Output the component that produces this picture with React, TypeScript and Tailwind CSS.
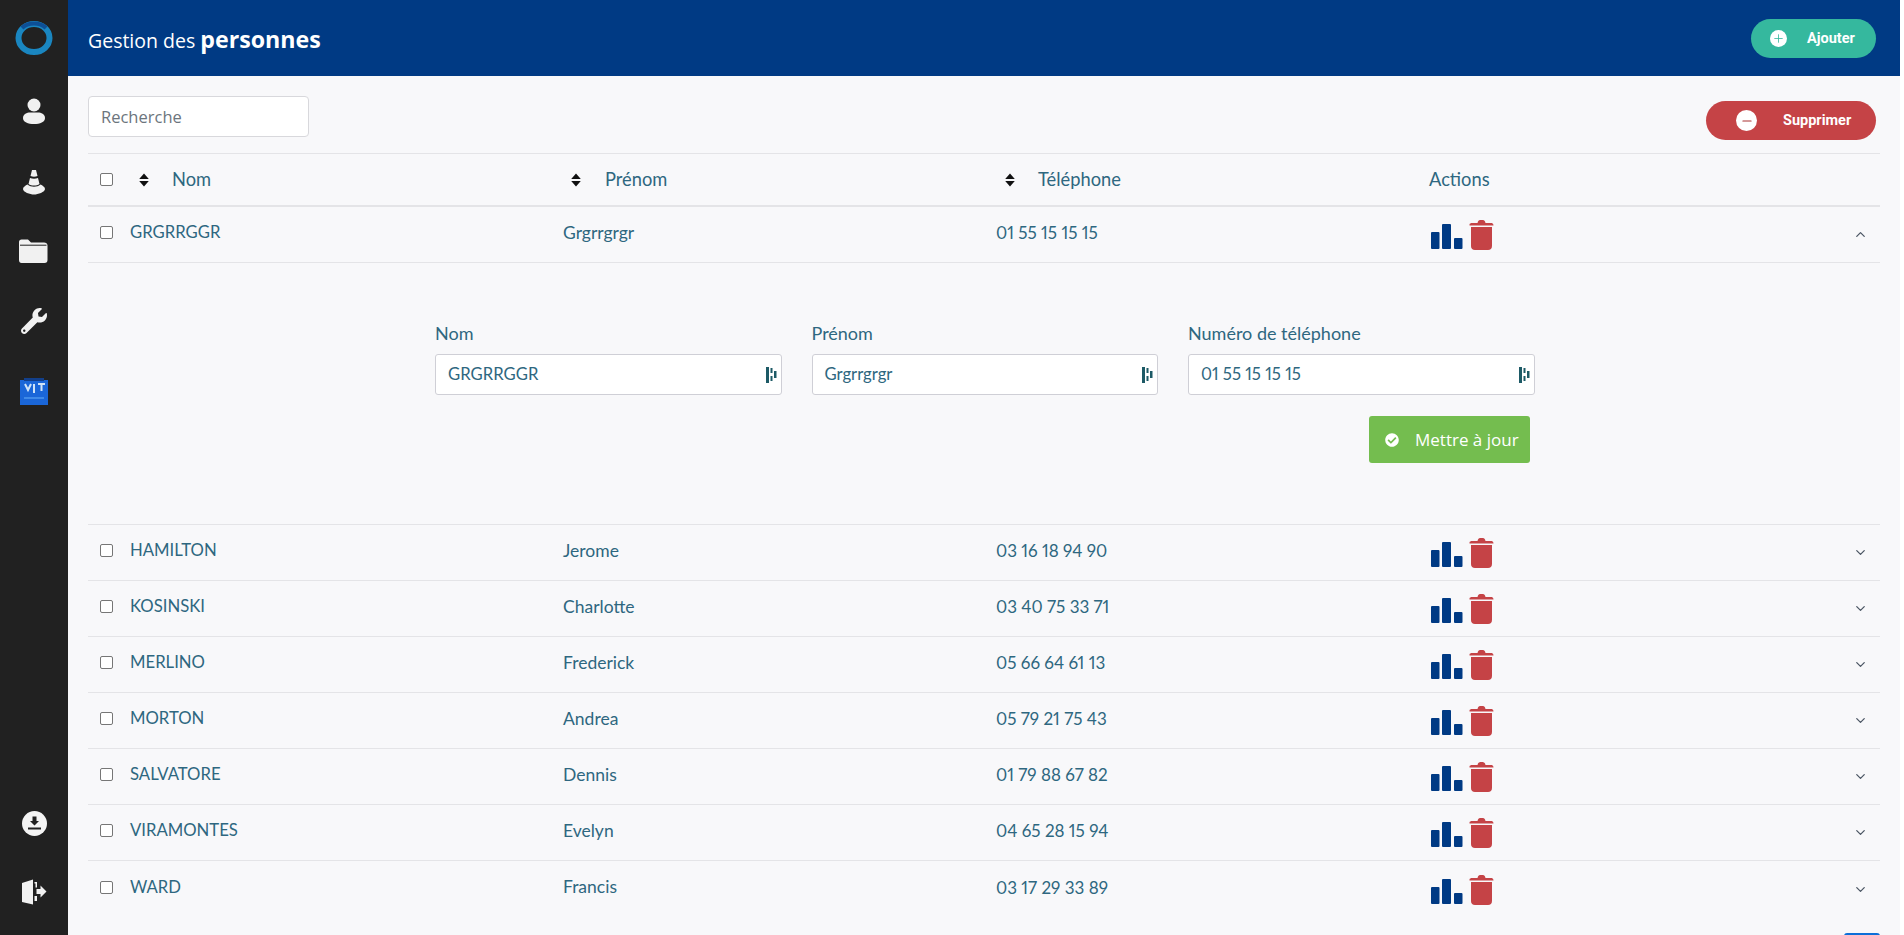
import React from 'react';
import { FaWrench, FaCheckCircle } from 'react-icons/fa';
import { ChevronDown, ChevronUp, Plus, Minus } from 'lucide-react';

const people = [
    { nom: 'HAMILTON', prenom: 'Jerome', tel: '03 16 18 94 90' },
    { nom: 'KOSINSKI', prenom: 'Charlotte', tel: '03 40 75 33 71' },
    { nom: 'MERLINO', prenom: 'Frederick', tel: '05 66 64 61 13' },
    { nom: 'MORTON', prenom: 'Andrea', tel: '05 79 21 75 43' },
    { nom: 'SALVATORE', prenom: 'Dennis', tel: '01 79 88 67 82' },
    { nom: 'VIRAMONTES', prenom: 'Evelyn', tel: '04 65 28 15 94' },
    { nom: 'WARD', prenom: 'Francis', tel: '03 17 29 33 89' },
];

const Box = () => <span className="block w-[13px] h-[13px] bg-white border border-[#767676] rounded-[2px]" />;

const SortIcon = () => (
    <svg width="10" height="14" viewBox="0 0 10 14" className="shrink-0">
        <path d="M5 0.5 L9.8 6 H0.2 Z M0.2 8 H9.8 L5 13.5 Z" fill="#111" />
    </svg>
);

const BarsIcon = () => (
    <svg width="32" height="26" viewBox="0 0 32 26" className="shrink-0">
        <rect x="0" y="8" width="8.5" height="17" rx="1" fill="#003a84" />
        <rect x="11" y="0" width="9" height="25" rx="1" fill="#003a84" />
        <rect x="23" y="14" width="8.5" height="11" rx="1" fill="#003a84" />
    </svg>
);

const TrashIcon = () => (
    <svg width="25" height="31" viewBox="0 0 25 31" className="shrink-0">
        <path d="M0.5 5.5 C0.5 4.5 2 4 3 4 H8.5 C9 1.5 10 1 12.5 1 C15 1 16 1.5 16.5 4 H22 C23 4 24.5 4.5 24.5 6.500 H0.5 Z" fill="#c54346" />
        <path d="M2 8 H23 V27 C23 29.5 21.500 31 19 31 H6 C3.500 31 2 29.5 2 27 Z" fill="#c54346" />
    </svg>
);

const FieldGlyph = () => (
    <svg width="11" height="16" viewBox="0 0 11 16" className="shrink-0">
        <rect x="0" y="0" width="3" height="16" fill="#1d5a66" />
        <rect x="4.5" y="1" width="2" height="5" fill="#1d5a66" />
        <rect x="4.5" y="9" width="2" height="5" fill="#1d5a66" />
        <rect x="8" y="4" width="2.5" height="7" fill="#1d5a66" />
    </svg>
);

const Logo = () => (
    <svg width="40" height="36" viewBox="0 0 40 36">
        <ellipse cx="20" cy="18" rx="15.5" ry="14" fill="none" stroke="#1a86c0" strokeWidth="6" />
        <path d="M8 8 C14 2 26 2 32 8" fill="none" stroke="#0d4f96" strokeWidth="4" />
    </svg>
);

const UserIcon = () => (
    <svg width="24" height="26" viewBox="0 0 24 26">
        <circle cx="12" cy="7" r="6.5" fill="#f1f1f1" />
        <path d="M1 20 C1 16 5 14.5 8 14.5 H16 C19 14.5 23 16 23 20 C23 24 18 26 12 26 C6 26 1 24 1 20 Z" fill="#f1f1f1" />
    </svg>
);

const ConeIcon = () => (
    <svg width="24" height="26" viewBox="0 0 24 26">
        <path d="M10 1 H14 L15.500 7 C13.500 8 10.500 8 8.500 7 Z" fill="#f1f1f1" />
        <path d="M8 9 C10.500 10 13.500 10 16 9 L17.500 15 C14.500 17 9.500 17 6.500 15 Z" fill="#f1f1f1" />
        <path d="M5.500 15.500 C9 18.500 15 18.500 18.500 15.500 C20.500 16.500 23 18 23 20 C23 23 16 25.500 12 25.500 C8 25.500 1 23 1 20 C1 18 3.500 16.500 5.500 15.500 Z" fill="#f1f1f1" />
    </svg>
);

const FolderIcon = () => (
    <svg width="30" height="26" viewBox="0 0 30 26">
        <path d="M1 4 C1 2.500 2 1.500 3.500 1.500 H10 L13 4.500 H26 C28 4.500 29.500 5.500 29.500 7.500 V22 C29.500 24 28.500 25 26.500 25 H3.500 C2 25 1 24 1 22 Z" fill="#f1f1f1" />
        <path d="M2 7.200 H28.500" stroke="#212121" strokeWidth="1" fill="none" />
    </svg>
);

const DownloadIcon = () => (
    <svg width="25" height="25" viewBox="0 0 25 25">
        <circle cx="12.500" cy="12.500" r="12.500" fill="#f4f4f4" />
        <path d="M10.500 5.500 H14.500 V10 H17 L12.500 14.500 L8 10 H10.500 Z" fill="#212121" />
        <rect x="6" y="16.500" width="13" height="2" fill="#212121" />
    </svg>
);

const ExitIcon = () => (
    <svg width="26" height="26" viewBox="0 0 26 26">
        <path d="M1 4 L12 0.500 V25.500 L1 23 Z" fill="#f1f1f1" />
        <path d="M13.500 3 H16 V8.500 H14.500 V4.500 H13.500 Z M13.500 17 H16 V22 H13.500 Z" fill="#f1f1f1" />
        <path d="M15.500 10 H19.500 V6.500 L25.500 12.500 L19.500 18.500 V15 H15.500 Z" fill="#f1f1f1" />
    </svg>
);

const AppTile = () => (
    <svg width="28" height="28" viewBox="0 0 28 28">
        <rect x="0" y="2" width="28" height="25" fill="#1a66d8" />
        <rect x="4" y="0" width="20" height="3" fill="#123f8a" />
        <path d="M5 6 L8 12 L11 6 M14 6 V15 M18 6 H25 M21.500 6 V13" fill="none" stroke="#cfe3f7" strokeWidth="2" />
        <rect x="4" y="19" width="20" height="2" fill="#3f8ae8" />
    </svg>
);

const Row = ({ nom, prenom, tel, open, last }: { nom: string; prenom: string; tel: string; open?: boolean; last?: boolean }) => (
    <div className={`flex items-center h-[56px] text-[17px] text-[#2e6780] proportional-nums ${last ? '' : 'border-b border-[#e4e4e7]'}`}>
        <div className="w-[42px] pl-3 shrink-0 -mt-[4px]"><Box /></div>
        <div className="w-[433px] shrink-0 -mt-[3px] text-[16.700px]">{nom}</div>
        <div className="w-[433px] shrink-0 -mt-[3px] text-[17.500px]">{prenom}</div>
        <div className="w-[434px] shrink-0 -mt-[3px]">{tel}</div>
        <div className="flex-1 flex items-end gap-[6px] pl-[1px]">
            <BarsIcon />
            <TrashIcon />
        </div>
        <div className="w-[27px] shrink-0 text-[#4b5563]">
            {open ? <ChevronUp size={15} /> : <ChevronDown size={15} />}
        </div>
    </div>
);

const Field = ({ label, value }: { label: string; value: string }) => (
    <div className="w-[346.500px] shrink-0">
        <div className="text-[18px] leading-[22px] text-[#2e6780]">{label}</div>
        <div className="mt-[10px] h-[41px] bg-white border border-[#cfcfd6] rounded-[3px] flex items-center justify-between pl-3 pr-[4px] text-[16.700px] text-[#2e6780] proportional-nums">
            <span>{value}</span>
            <FieldGlyph />
        </div>
    </div>
);

export default function App() {
    return (
        <div className="flex h-[935px] w-full overflow-hidden bg-[#f8f8fa] font-['Lato',sans-serif]">
            <aside className="w-[68px] shrink-0 bg-[#212121] flex flex-col items-center">
                <div className="mt-[20px]"><Logo /></div>
                <div className="mt-[42px]"><UserIcon /></div>
                <div className="mt-[45px]"><ConeIcon /></div>
                <div className="mt-[43px] -ml-[2px]"><FolderIcon /></div>
                <div className="mt-[44px] text-[#f1f1f1] text-[26px]"><FaWrench /></div>
                <div className="mt-[44px]"><AppTile /></div>
                <div className="mt-auto"><DownloadIcon /></div>
                <div className="mt-[43px] mb-[30px]"><ExitIcon /></div>
            </aside>

            <main className="w-[1832px] shrink-0 flex flex-col">
                <header className="h-[76px] shrink-0 bg-[#003a84] flex items-center justify-between pl-[20px] pr-[24px]">
                    <h1 className="text-[19.500px] text-white font-['Open_Sans',sans-serif] mt-[3px]">
                        Gestion des <span className="text-[23.200px] font-bold">personnes</span>
                    </h1>
                    <button className="w-[125px] h-[39px] rounded-full bg-[#35b89e] flex items-center pl-[19px] text-white text-[14.500px] font-bold font-['Roboto',sans-serif]">
                        <span className="w-[17px] h-[17px] rounded-full bg-white flex items-center justify-center text-[#35b89e]">
                            <Plus size={13} strokeWidth={1.5} />
                        </span>
                        <span className="ml-[20px] mt-[1px]">Ajouter</span>
                    </button>
                </header>

                <div className="flex-1 pl-[20px] pr-[20px]">
                    <div className="flex justify-between pt-[20px] h-[77px]">
                        <input
                            readOnly
                            placeholder="Recherche"
                            className="w-[221px] h-[41px] bg-white border border-[#d8d8dc] rounded-[4px] px-3 text-[16.500px] font-['Open_Sans',sans-serif] placeholder:text-[#6c757d] outline-none"
                        />
                        <button className="w-[170px] h-[39px] mt-[5px] mr-[4px] rounded-full bg-[#c54346] flex items-center pl-[30px] text-white text-[14.500px] font-bold font-['Roboto',sans-serif]">
                            <span className="w-[21px] h-[21px] rounded-full bg-white flex items-center justify-center text-[#a33]">
                                <Minus size={14} strokeWidth={2} />
                            </span>
                            <span className="ml-[26px]">Supprimer</span>
                        </button>
                    </div>

                    <div className="flex items-center h-[54px] border-t border-b-2 border-t-[#e4e4e7] border-b-[#e4e4e7] text-[18.300px] text-[#2e6780]">
                        <div className="w-[42px] pl-3 shrink-0"><Box /></div>
                        <div className="w-[433px] shrink-0 pl-[9px] flex items-center gap-[23px]"><SortIcon />Nom</div>
                        <div className="w-[433px] shrink-0 pl-[8px] flex items-center gap-[24px]"><SortIcon />Prénom</div>
                        <div className="w-[433px] shrink-0 pl-[9px] flex items-center gap-[23px]"><SortIcon />Téléphone</div>
                        <div className="flex-1">Actions</div>
                    </div>

                    <Row nom="GRGRRGGR" prenom="Grgrrgrgr" tel="01 55 15 15 15" open />

                    <div className="h-[262px] border-b border-[#e4e4e7] pl-[347px] pt-[59px]">
                        <div className="flex gap-[30px]">
                            <Field label="Nom" value="GRGRRGGR" />
                            <Field label="Prénom" value="Grgrrgrgr" />
                            <Field label="Numéro de téléphone" value="01 55 15 15 15" />
                        </div>
                        <div className="flex justify-end w-[1095px] mt-[21px]">
                            <button className="w-[161px] h-[47px] bg-[#74bd4f] rounded-[3px] flex items-center pl-[16px] text-white text-[17px] font-['Open_Sans',sans-serif]">
                                <FaCheckCircle size={14} />
                                <span className="ml-[16px]">Mettre à jour</span>
                            </button>
                        </div>
                    </div>

                    {people.map((p, i) => <Row key={p.nom} {...p} last={i === people.length - 1} />)}

                    <div className="flex justify-end mt-[16px]">
                        <div className="w-[36px] h-[30px] bg-[#0d6fd8] rounded-t-[3px]" />
                    </div>
                </div>
            </main>
            <div className="w-[4px] bg-white shrink-0" />
        </div>
    );
}
